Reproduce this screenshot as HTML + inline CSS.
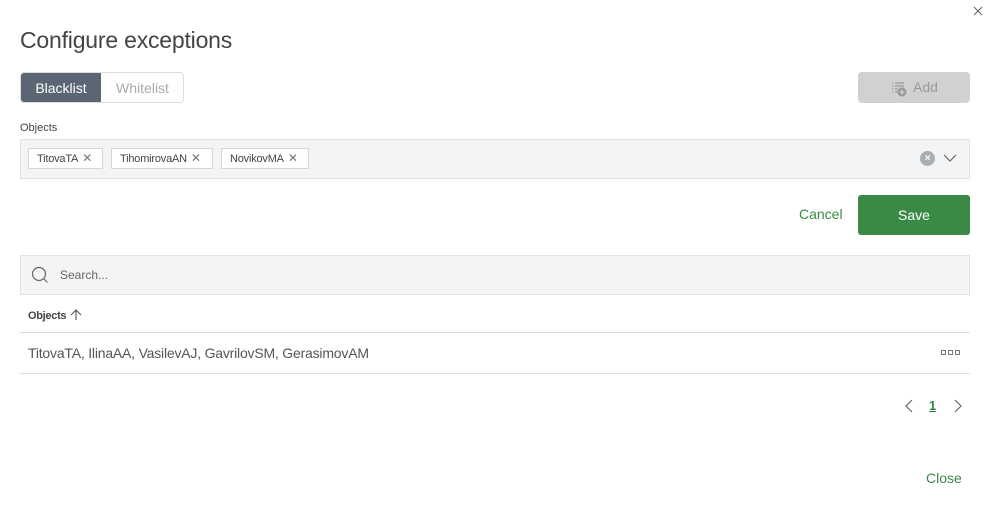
<!DOCTYPE html>
<html><head><style>
*{box-sizing:border-box;margin:0;padding:0}
body{width:988px;height:512px;background:#fff;font-family:"Liberation Sans",sans-serif;position:relative;overflow:hidden;color:#333}
.a{position:absolute}
.tag{position:absolute;top:148px;height:21px;border:1px solid #d6d6d6;background:#fff;font-size:11px;color:#444;line-height:19px;padding-left:8px;letter-spacing:-0.2px}
.tag span{color:#777;margin-left:4px;font-size:12px}
</style></head><body>
<svg class="a" style="left:973px;top:6px" width="10" height="10"><path d="M1 1l8 8M9 1l-8 8" stroke="#666" stroke-width="1.1"/></svg>
<div class="a" style="left:20px;top:27px;font-size:23px;color:#444;letter-spacing:-0.2px">Configure exceptions</div>
<div class="a" style="left:20px;top:72px;width:164px;height:31px;border:1px solid #ddd;border-radius:4px;overflow:hidden">
 <div class="a" style="left:0;top:0;width:80px;height:31px;background:#5a6673;color:#fff;font-size:14px;line-height:30px;text-align:center">Blacklist</div>
 <div class="a" style="left:80px;top:0;width:83px;height:31px;color:#aaa;font-size:14px;line-height:30px;text-align:center">Whitelist</div>
</div>
<div class="a" style="left:858px;top:72px;width:112px;height:31px;background:#d0d1d3;border-radius:4px;color:#9a9a9a;font-size:14px;line-height:31px;padding-left:55px">Add</div>
<svg class="a" style="left:891px;top:81px" width="16" height="16"><path d="M1 2h1M1 5h1M1 8h1M1 11h1M4 2h9M4 5h9M4 8h3M4 11h3" stroke="#999" stroke-width="1.2"/><circle cx="11" cy="11" r="4.5" fill="#999"/><path d="M11 8.5v5M8.5 11h5" stroke="#d0d1d3" stroke-width="1.3"/></svg>
<div class="a" style="left:20px;top:122px;font-size:11px;color:#444">Objects</div>
<div class="a" style="left:20px;top:139px;width:950px;height:40px;background:#f3f4f5;border:1px solid #e2e2e2"></div>
<div class="tag" style="left:28px;width:75px">TitovaTA<span>✕</span></div>
<div class="tag" style="left:111px;width:102px">TihomirovaAN<span>✕</span></div>
<div class="tag" style="left:221px;width:88px">NovikovMA<span>✕</span></div>
<div class="a" style="left:920px;top:151px;width:15px;height:15px;border-radius:50%;background:#a9aeb3;color:#fff;font-size:10px;line-height:15px;text-align:center;font-weight:bold">×</div>
<svg class="a" style="left:943px;top:153px" width="14" height="10"><path d="M1 2l6 6 6-6" fill="none" stroke="#666" stroke-width="1.2"/></svg>
<div class="a" style="left:799px;top:206px;font-size:14px;color:#3a8a46">Cancel</div>
<div class="a" style="left:858px;top:195px;width:112px;height:40px;background:#3a8a46;border-radius:3px;color:#fff;font-size:14px;line-height:40px;text-align:center">Save</div>
<div class="a" style="left:20px;top:255px;width:950px;height:40px;background:#f3f4f5;border:1px solid #e2e2e2"></div>
<svg class="a" style="left:31px;top:266px" width="18" height="18"><circle cx="8" cy="8" r="6.5" fill="none" stroke="#666" stroke-width="1.2"/><path d="M12.5 12.5l4 4" stroke="#666" stroke-width="1.2"/></svg>
<div class="a" style="left:60px;top:268px;font-size:12px;color:#666">Search...</div>
<div class="a" style="left:28px;top:310px;font-size:11px;color:#444;font-weight:bold;letter-spacing:-0.3px">Objects</div>
<svg class="a" style="left:70px;top:309px" width="12" height="12"><path d="M6 11V1M1 6l5-5 5 5" fill="none" stroke="#555" stroke-width="1.1"/></svg>
<div class="a" style="left:20px;top:332px;width:950px;height:1px;background:#ddd"></div>
<div class="a" style="left:28px;top:345px;font-size:14px;color:#555;letter-spacing:-0.2px">TitovaTA, IlinaAA, VasilevAJ, GavrilovSM, GerasimovAM</div>
<div class="a" style="left:941px;top:350px;display:flex;gap:2px"><i style="width:5px;height:5px;border:1px solid #777"></i><i style="width:5px;height:5px;border:1px solid #777"></i><i style="width:5px;height:5px;border:1px solid #777"></i></div>
<div class="a" style="left:20px;top:373px;width:950px;height:1px;background:#ddd"></div>
<svg class="a" style="left:904px;top:399px" width="10" height="14"><path d="M8 1L2 7l6 6" fill="none" stroke="#666" stroke-width="1.2"/></svg>
<div class="a" style="left:929px;top:398px;font-size:13px;color:#3a8a46;font-weight:bold;text-decoration:underline">1</div>
<svg class="a" style="left:953px;top:399px" width="10" height="14"><path d="M2 1l6 6-6 6" fill="none" stroke="#666" stroke-width="1.2"/></svg>
<div class="a" style="left:926px;top:470px;font-size:14px;color:#3a8a46">Close</div>
</body></html>
